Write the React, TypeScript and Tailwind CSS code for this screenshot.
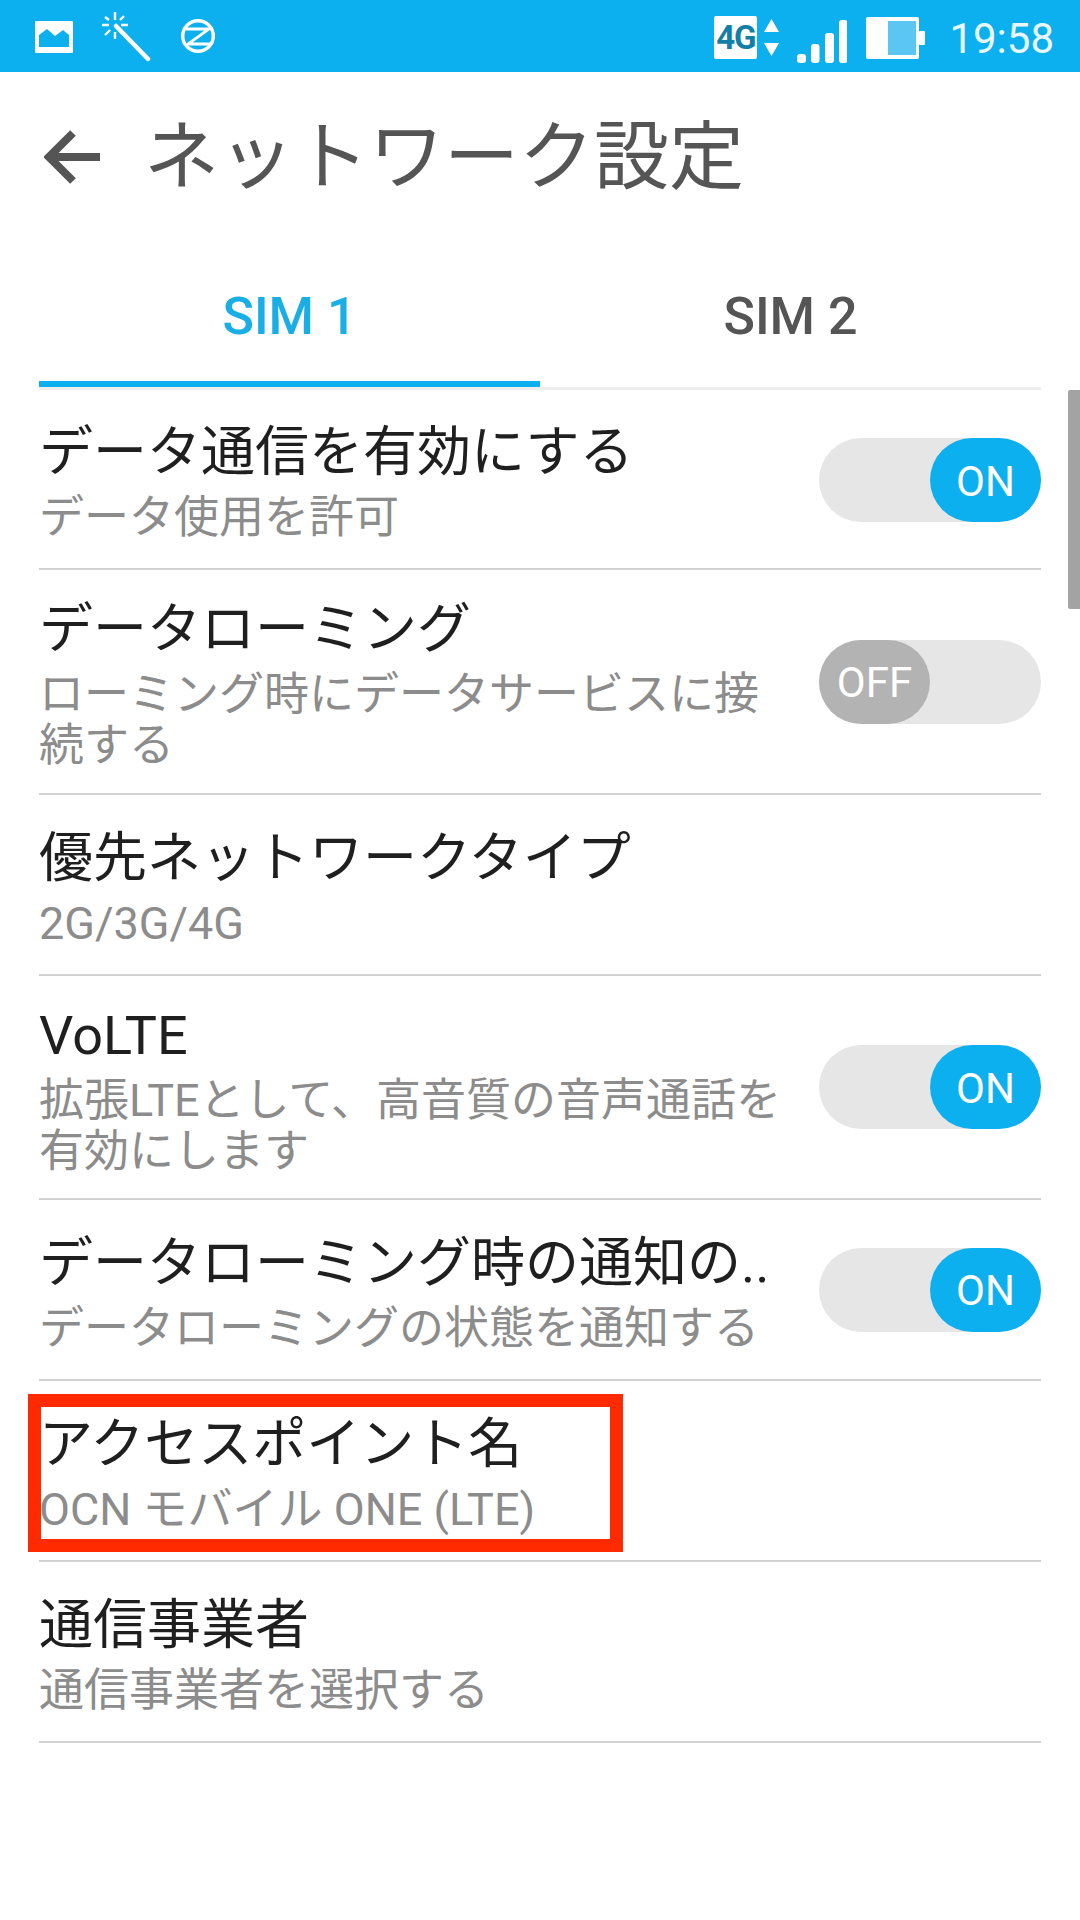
import React from "react";

const font = { fontFamily: 'Roboto, "Noto Sans CJK JP", sans-serif' };

function Toggle({ on, className = "" }: { on: boolean; className?: string }) {
  return (
    <div className={`flex h-[84px] w-[222px] shrink-0 rounded-[42px] bg-[#e6e6e6] ${on ? "justify-end" : "justify-start"} ${className}`}>
      <div className={`flex h-[84px] w-[111px] items-center justify-center rounded-[42px] pt-[3px] text-[42px] leading-none text-white ${on ? "bg-[#0db0ee]" : "bg-[#b3b3b3]"}`}>
        {on ? "ON" : "OFF"}
      </div>
    </div>
  );
}

function Row({
  title,
  sub,
  toggle,
  h,
  children,
  toggleClass = "",
}: {
  title: string;
  sub: string[];
  toggle?: boolean;
  h: string;
  children?: React.ReactNode;
  toggleClass?: string;
}) {
  return (
    <div className={`relative flex items-center justify-between border-b-2 border-[#d2d2d2] ${h}`}>
      <div className="flex min-w-0 flex-col pt-[7px]">
        <div className="mb-[8px] whitespace-nowrap text-[54px] leading-[62px] text-[#1f1f1f]">{title}</div>
        {sub.map((s) => (
          <div key={s} className="whitespace-nowrap text-[45px] leading-[51px] text-[#8c8c8c]">
            {s}
          </div>
        ))}
      </div>
      {toggle !== undefined && <Toggle on={toggle} className={toggleClass} />}
      {children}
    </div>
  );
}

function StatusBar() {
  return (
    <div className="flex h-[72px] items-center justify-between bg-[#0db0ee] pl-[35px] pr-[26px]">
      <div className="flex items-center">
        <svg width="38" height="32" viewBox="0 0 38 32" className="mt-[2px]">
          <path fillRule="evenodd" fill="#fff" d="M1 0h36a1 1 0 0 1 1 1v30a1 1 0 0 1-1 1H1a1 1 0 0 1-1-1V1a1 1 0 0 1 1-1zM4 26h30V14l-6-5-8 6-8-7-8 6z" />
        </svg>
        <svg width="49" height="50" viewBox="0 0 49 50" className="ml-[29px] mt-[2px]" stroke="#fff" fill="none">
          <path d="M14 14L46 47" strokeWidth="4.5" strokeLinecap="round" />
          <path d="M13 0V8M13 20V27M0 13H7M19 13H26M3 5L7 8M22 4L18 8M3 23L8 18" strokeWidth="2.4" />
        </svg>
        <svg width="34" height="34" viewBox="0 0 34 34" className="ml-[30px]" stroke="#fff" fill="none" strokeWidth="3.4">
          <circle cx="17" cy="17" r="15.3" />
          <path d="M5 10H28L7 25H29" strokeWidth="2.8" />
        </svg>
      </div>
      <div className="flex items-center">
        <div className="mt-[3px] flex h-[43px] w-[43px] items-center justify-center rounded-[2px] bg-white text-[33px] font-bold leading-none tracking-[-1px] text-[#137fa8]">
          4G
        </div>
        <svg width="15" height="37" viewBox="0 0 15 37" className="ml-[7px] mt-[3px]" fill="#fff">
          <path d="M7.5 0L15 13H0zM0 24H15L7.5 37z" />
        </svg>
        <svg width="50" height="43" viewBox="0 0 50 43" className="ml-[18px] mt-[11px]" fill="#fff">
          <rect x="0" y="34" width="9" height="9" rx="3" />
          <rect x="14" y="24" width="8.5" height="19" rx="3" />
          <rect x="28" y="13" width="9" height="30" rx="3" />
          <rect x="42" y="0" width="8.5" height="43" rx="3" />
        </svg>
        <svg width="59" height="42" viewBox="0 0 59 42" className="ml-[19px] mt-[4px]">
          <rect x="0" y="0" width="53" height="42" rx="2" fill="#fff" />
          <rect x="22" y="4" width="28" height="34" fill="#5bc6f2" />
          <rect x="53" y="14" width="6" height="14" rx="1" fill="#fff" />
        </svg>
        <div className="ml-[24px] mt-[6px] text-[42px] leading-none text-[#e9f8fe]">19:58</div>
      </div>
    </div>
  );
}

export default function App() {
  return (
    <div className="relative h-[1920px] w-[1080px] overflow-hidden bg-white" style={font}>
      <StatusBar />
      <div className="flex h-[170px] items-center pl-[44px]">
        <svg width="56" height="54" viewBox="0 0 56 54" stroke="#555" fill="none" strokeWidth="8">
          <path d="M56 27H6M29 3L5 27L29 51" />
        </svg>
        <div className="ml-[44px] text-[75px] leading-none text-[#555555]">ネットワーク設定</div>
      </div>
      <div className="mx-[39px] flex h-[148px] border-b-[3px] border-[#eeeeee]">
        <div className="flex w-[501px] items-center justify-center border-b-[6px] border-[#0db0ee] pt-[10px] text-[52px] font-medium text-[#1aaee6]">
          SIM 1
        </div>
        <div className="flex flex-1 items-center justify-center pb-[6px] pt-[10px] text-[52px] font-medium text-[#555555]">SIM 2</div>
      </div>
      <div className="mx-[39px] flex flex-col">
        <Row h="h-[180px]" title="データ通信を有効にする" sub={["データ使用を許可"]} toggle={true} toggleClass="mt-[2px]" />
        <Row h="h-[225px]" title="データローミング" sub={["ローミング時にデータサービスに接", "続する"]} toggle={false} />
        <Row h="h-[181px]" title="優先ネットワークタイプ" sub={["2G/3G/4G"]} />
        <Row h="h-[224px]" title="VoLTE" sub={["拡張LTEとして、高音質の音声通話を", "有効にします"]} toggle={true} />
        <Row h="h-[181px]" title="データローミング時の通知の.." sub={["データローミングの状態を通知する"]} toggle={true} />
        <Row h="h-[181px]" title="アクセスポイント名" sub={["OCN モバイル ONE (LTE)"]}>
          <div className="absolute left-[-11px] top-[13px] h-[158px] w-[595px] border-[13px] border-[#ff2a00]" />
        </Row>
        <Row h="h-[181px]" title="通信事業者" sub={["通信事業者を選択する"]} />
      </div>
      <div className="absolute right-0 top-[390px] h-[219px] w-[12px] rounded-l-[2px] bg-[#a3a3a3]" />
    </div>
  );
}
